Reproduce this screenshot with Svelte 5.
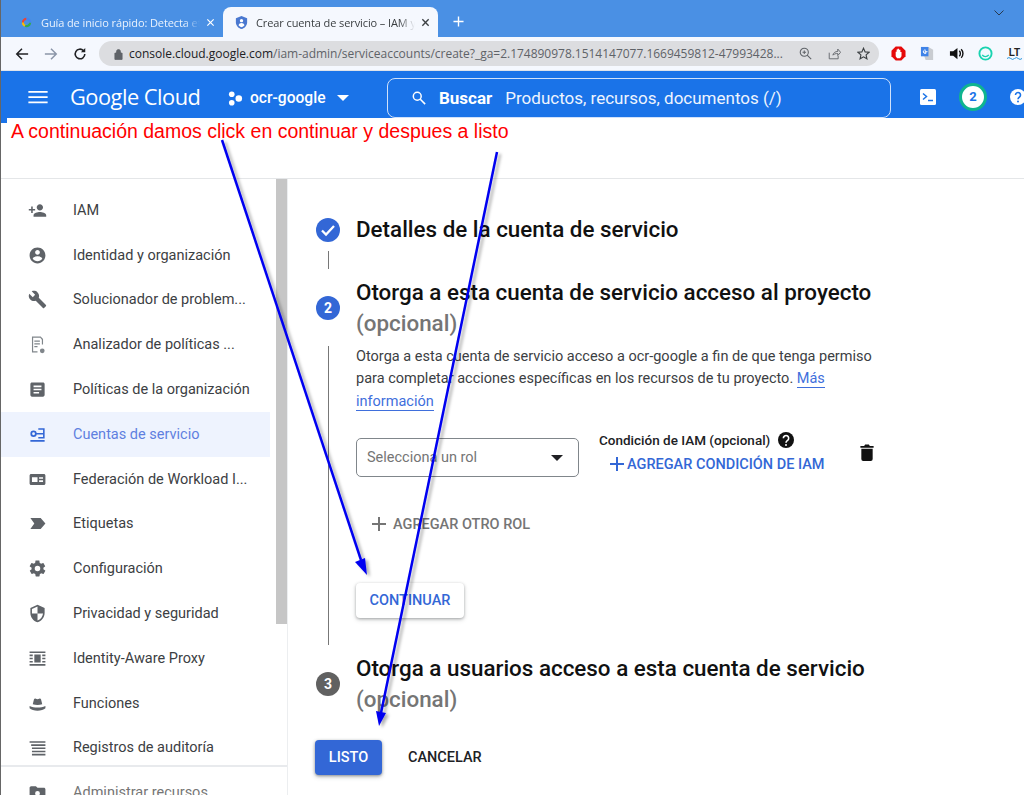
<script>
  const navItems = [
    { label: 'IAM', icon: 'M15 12c2.200 0 4-1.800 4-4s-1.800-4-4-4-4 1.800-4 4 1.800 4 4 4zm-9-2V7H4v3H1v2h3v3h2v-3h3v-2H6zm9 4c-2.700 0-8 1.300-8 4v2h16v-2c0-2.700-5.300-4-8-4z' },
    { label: 'Identidad y organización', icon: 'M12 2C6.500 2 2 6.500 2 12s4.500 10 10 10 10-4.500 10-10S17.500 2 12 2zm0 3c1.700 0 3 1.300 3 3s-1.300 3-3 3-3-1.300-3-3 1.300-3 3-3zm0 14.200c-2.500 0-4.700-1.300-6-3.200 0-2 4-3.100 6-3.100s6 1.100 6 3.100c-1.300 1.900-3.500 3.200-6 3.200z' },
    { label: 'Solucionador de problem...', icon: 'M22.700 19l-9.100-9.100c.9-2.300.4-5-1.500-6.900-2-2-5-2.400-7.400-1.300L9 6 6 9 1.600 4.700C.4 7.100.9 10.100 2.900 12.100c1.900 1.900 4.600 2.400 6.900 1.500l9.100 9.100c.4.400 1 .4 1.400 0l2.300-2.300c.5-.4.5-1.100.1-1.400z' },
    { label: 'Analizador de políticas ...', small: true, icon: 'M5 2h11l3 3v7h-1.500V6l-2-2.500H6.500v17H12V22H5V2zm3 5h7v1.500H8V7zm0 3.500h7V12H8v-1.500zM8 14h4v1.500H8V14zm10 3a3 3 0 1 1 0 6 3 3 0 0 1 0-6z' },
    { label: 'Políticas de la organización', icon: 'M19 3H5c-1.100 0-2 .9-2 2v14c0 1.100.9 2 2 2h14c1.100 0 2-.9 2-2V5c0-1.100-.9-2-2-2zm-5 14H7v-2h7v2zm3-4H7v-2h10v2zm0-4H7V7h10v2z' },
    { label: 'Cuentas de servicio', active: true, icon: 'M3 19h18v2H3v-2zM13 4h8v13h-8v-2h6v-3h-6v-2h6V6h-6V4zM7 7a4 4 0 1 1 0 8 4 4 0 0 1 0-8zm0 2.200a1.800 1.800 0 1 0 0 3.600 1.800 1.800 0 0 0 0-3.600zM10.500 10h3v2h-3z' },
    { label: 'Federación de Workload I...', icon: 'M20 5H4c-1.100 0-2 .9-2 2v10c0 1.100.9 2 2 2h16c1.100 0 2-.9 2-2V7c0-1.100-.9-2-2-2zM5 9h7v6H5V9zm9 0h5v2h-5V9zm0 4h5v2h-5v-2z' },
    { label: 'Etiquetas', icon: 'M3 5h13l6 7-6 7H3l5-7-5-7z' },
    { label: 'Configuración', icon: 'M19.400 13c0-.3.1-.6.1-1s0-.7-.1-1l2.100-1.600c.2-.2.2-.4.1-.6l-2-3.500c-.1-.2-.4-.3-.6-.2l-2.500 1c-.5-.4-1.100-.7-1.700-1l-.4-2.700c0-.2-.2-.4-.5-.4h-4c-.2 0-.4.2-.5.4l-.4 2.700c-.6.2-1.100.6-1.700 1l-2.500-1c-.2-.1-.5 0-.6.2l-2 3.500c-.1.2-.1.500.1.600L4.600 11c0 .3-.1.6-.1 1s0 .7.1 1l-2.100 1.600c-.2.2-.2.4-.1.6l2 3.500c.1.2.4.3.6.2l2.500-1c.5.4 1.100.7 1.700 1l.4 2.700c0 .2.2.4.5.4h4c.2 0 .4-.2.5-.4l.4-2.700c.6-.2 1.100-.6 1.700-1l2.500 1c.2.1.5 0 .6-.2l2-3.500c.1-.2.1-.5-.1-.6L19.400 13zM12 15.500a3.500 3.500 0 1 1 0-7 3.500 3.500 0 0 1 0 7z' },
    { label: 'Privacidad y seguridad', icon: 'M12 1L3 5v6c0 5.600 3.800 10.700 9 12 5.200-1.300 9-6.400 9-12V5l-9-4zm0 11h7c-.5 4.100-3.300 7.800-7 8.900V12H5V6.300l7-3.100V12z' },
    { label: 'Identity-Aware Proxy', icon: 'M2 3h20v2H2V3zm0 16h20v2H2v-2zM2 7h4v2H2V7zm0 4h4v2H2v-2zm0 4h4v2H2v-2zm16-8h4v2h-4V7zm0 4h4v2h-4v-2zm0 4h4v2h-4v-2zM8 7h8v10H8V7z' },
    { label: 'Funciones', icon: 'M2 15c3 1.500 6.500 2 10 2s7-.5 10-2v3c-2 2-6 3-10 3s-8-1-10-3v-3zM6 13l1.500-6c.3-1 1.300-1.500 2.300-1.100l2.200.7 2.200-.7c1-.4 2-.1 2.300 1.100L18 13c-3.800 1.200-8.200 1.200-12 0z' },
    { label: 'Registros de auditoría', icon: 'M2 4h20v2H2V4zm2 4h18v2H4V8zm1 4h17v2H5v-2zm0 4h17v2H5v-2zm0 4h17v2H5v-2z' }
  ];
</script>

<div class="page">
  <div class="tabstrip">
    <div class="tab off">
      <svg class="favicon" viewBox="0 0 16 16"><path d="M8 3a5 5 0 0 0-5 5l2.200.4A3 3 0 0 1 8 5.200z" fill="#ea4335"/><path d="M3 8a5 5 0 0 0 3 4.600l1-2A3 3 0 0 1 5.200 8z" fill="#fbbc04"/><path d="M6 12.600A5 5 0 0 0 13 8h-2.200A3 3 0 0 1 7 10.600z" fill="#34a853"/><path d="M8 3a5 5 0 0 1 5 5h-2.200A3 3 0 0 0 8 5.200z" fill="#4285f4"/></svg>
      <span class="tabtitle">Guía de inicio rápido: Detecta eti</span>
      <svg class="tabx" viewBox="0 0 10 10"><path d="M1.500 1.500l7 7m0-7l-7 7" stroke="#fff" stroke-width="1.300"/></svg>
    </div>
    <div class="tab on">
      <svg class="favicon" viewBox="0 0 16 16"><path d="M8 1l6 2.500v4.200c0 3.500-2.500 6.300-6 7.300-3.500-1-6-3.800-6-7.300V3.500z" fill="#4a78d0"/><circle cx="8" cy="6" r="1.800" fill="#fff"/><path d="M4.800 11c.5-1.700 1.800-2.400 3.200-2.400s2.700.7 3.200 2.400c-.8 1-2 1.700-3.200 2-1.200-.3-2.400-1-3.200-2z" fill="#fff"/></svg>
      <span class="tabtitle">Crear cuenta de servicio – IAM y a</span>
      <svg class="tabx" viewBox="0 0 10 10"><path d="M1.500 1.500l7 7m0-7l-7 7" stroke="#3c4043" stroke-width="1.500"/></svg>
    </div>
    <svg class="newtab" viewBox="0 0 12 12"><path d="M6 .5v11M.5 6h11" stroke="#fff" stroke-width="1.500"/></svg>
    <svg class="chev" viewBox="0 0 10 6"><path d="M.5.500L5 5 9.500.500" fill="none" stroke="#27394f" stroke-width="1"/></svg>
  </div>

  <div class="toolbar">
    <svg class="navbtn" viewBox="0 0 16 16"><path d="M15 8H2M8 2L2 8l6 6" fill="none" stroke="#202124" stroke-width="1.700"/></svg>
    <svg class="navbtn" viewBox="0 0 16 16"><path d="M1 8h13M8 2l6 6-6 6" fill="none" stroke="#8a95a8" stroke-width="1.700"/></svg>
    <svg class="navbtn" viewBox="0 0 16 16"><path d="M13.500 8a5.500 5.500 0 1 1-1.600-3.900" fill="none" stroke="#202124" stroke-width="1.800"/><path d="M14 1v5H9z" fill="#202124"/></svg>
    <div class="urlbar">
      <svg class="lock" viewBox="0 0 10 12"><path d="M1 5h8v7H1zM2.800 5V3.300a2.200 2.200 0 0 1 4.400 0V5" fill="#5f6368" stroke="#5f6368" stroke-width=".9"/></svg>
      <span class="url"><span class="host">console.cloud.google.com</span>/iam-admin/serviceaccounts/create?_ga=2.174890978.1514147077.1669459812-47993428...</span>
      <svg class="urlicon" viewBox="0 0 16 16"><circle cx="6.500" cy="6.500" r="5" fill="none" stroke="#5f6368" stroke-width="1.300"/><path d="M10 10l5 5M6.500 4.300v4.400M4.300 6.500h4.400" stroke="#5f6368" stroke-width="1.300"/></svg>
      <svg class="urlicon" viewBox="0 0 16 16"><path d="M1.500 7v7.500h11V11M6 10c.5-3 3-4.500 6-4.500V2.500l3.500 4-3.500 4V8c-2.500 0-4.500.5-6 2z" fill="none" stroke="#5f6368" stroke-width="1.100"/></svg>
      <svg class="urlicon" viewBox="0 0 16 16"><path d="M8 1.500l2 4.500 4.800.5-3.600 3.200 1 4.800L8 12.100l-4.200 2.400 1-4.800L1.200 6.500 6 6z" fill="none" stroke="#3c4043" stroke-width="1.400"/></svg>
    </div>
    <div class="extensions">
      <svg viewBox="0 0 16 16"><path d="M5 .5h6L15.500 5v6L11 15.500H5L.5 11V5z" fill="#e60a0a"/><path d="M5 11V6h1V3.800h1V3h1.500v1H10v2.500h1.200V11l-1.500 2H6.500z" fill="#fff"/></svg>
      <svg viewBox="0 0 16 16"><path d="M1 1h8l5 3v11H6z" fill="#c9ccd1"/><path d="M1 1h8v10H1z" fill="#3f83e8"/><path d="M8 6H5.300v1.300h1.400A1.800 1.800 0 1 1 6.300 4.600" fill="none" stroke="#fff" stroke-width="1"/></svg>
      <svg viewBox="0 0 16 16"><path d="M1 5.500h3.500L9 2v12L4.500 10.500H1z" fill="#111"/><path d="M11 5c1.500 1.500 1.500 4.500 0 6M13 3.500c2.500 2.500 2.500 6.500 0 9" fill="none" stroke="#111" stroke-width="1.500"/></svg>
      <svg viewBox="0 0 16 16"><circle cx="8" cy="8" r="6.500" fill="none" stroke="#19d3b0" stroke-width="2"/><path d="M4.500 9.500c1.500 2.500 5 2.500 7 0" fill="none" stroke="#19d3b0" stroke-width="1.500"/></svg>
      <span class="lt">LT<svg viewBox="0 0 16 3"><path d="M0 1.500q2-2 4 0t4 0 4 0 4 0" fill="none" stroke="#1c8fd9" stroke-width="1"/></svg></span>
    </div>
  </div>

  <header class="topbar">
    <svg class="menu" viewBox="0 0 22 16"><path d="M0 2h22M0 8h22M0 14h22" stroke="#fff" stroke-width="2"/></svg>
    <span class="brand">Google Cloud</span>
    <svg class="projdots" viewBox="0 0 16 16"><circle cx="4" cy="3.500" r="3" fill="#fff"/><circle cx="11.500" cy="8" r="3.500" fill="#fff"/><circle cx="4" cy="12.500" r="3" fill="#fff"/></svg>
    <span class="project">ocr-google</span>
    <svg class="caret" viewBox="0 0 12 6"><path d="M0 0h12L6 6z" fill="#fff"/></svg>
    <div class="search">
      <svg class="searchicon" viewBox="0 0 16 16"><circle cx="6" cy="6" r="4.500" fill="none" stroke="#fff" stroke-width="1.700"/><path d="M9.500 9.500l5.500 5.500" stroke="#fff" stroke-width="1.800"/></svg>
      <b>Buscar</b>
      <span>Productos, recursos, documentos (/)</span>
    </div>
    <svg class="terminal" viewBox="0 0 16 16"><rect width="16" height="16" rx="1.500" fill="#fff"/><path d="M3 4.500L6.500 7.500 3 10.500" fill="none" stroke="#1a73e8" stroke-width="1.500"/><path d="M8 11.500h5" stroke="#1a73e8" stroke-width="1.500"/></svg>
    <span class="notif">2</span>
    <svg class="help" viewBox="0 0 16 16"><circle cx="8" cy="8" r="8" fill="#fff"/><path d="M5.500 6a2.500 2.500 0 1 1 4 2c-1 .7-1.500 1.200-1.500 2.300" fill="none" stroke="#1a73e8" stroke-width="1.600"/><circle cx="8" cy="12.500" r="1" fill="#1a73e8"/></svg>
  </header>

  <div class="note">A continuación damos click en continuar y despues a listo</div>

  <div class="workspace">
    <aside class="sidebar">
      <nav class="navlist">
        {#each navItems as item}
          <div class="navitem" class:active={item.active} class:small={item.small}>
            <svg viewBox="0 0 24 24"><path d={item.icon}/></svg>
            <span>{item.label}</span>
          </div>
        {/each}
      </nav>
      <div class="navitem manage">
        <svg viewBox="0 0 24 24"><path d="M20 6h-8l-2-2H4c-1.100 0-2 .9-2 2v12c0 1.100.9 2 2 2h16c1.100 0 2-.9 2-2V8c0-1.100-.9-2-2-2zm-8 10a3 3 0 1 1 0-6 3 3 0 0 1 0 6z"/></svg>
        <span>Administrar recursos</span>
      </div>
      <div class="scrollthumb"></div>
    </aside>

    <main class="content">
      <div class="step first">
        <span class="bullet">
          <svg viewBox="0 0 24 24"><circle cx="12" cy="12" r="12" fill="#3367d6"/><path d="M6 12.500l4 4 8-8.500" fill="none" stroke="#fff" stroke-width="2.300"/></svg>
        </span>
        <h2>Detalles de la cuenta de servicio</h2>
      </div>
      <div class="rail short"></div>

      <div class="step">
        <span class="bullet num">2</span>
        <h2>Otorga a esta cuenta de servicio acceso al proyecto <em>(opcional)</em></h2>
      </div>
      <div class="stepbody">
        <p>Otorga a esta cuenta de servicio acceso a ocr-google a fin de que tenga permiso para completar acciones específicas en los recursos de tu proyecto. <a href="#top">Más información</a></p>
        <div class="rolerow">
          <div class="roleselect">
            <span>Selecciona un rol</span>
            <svg viewBox="0 0 12 6"><path d="M0 0h12L6 6z" fill="#202124"/></svg>
          </div>
          <div class="condition">
            <div class="condlabel">
              Condición de IAM (opcional)
              <svg viewBox="0 0 24 24"><circle cx="12" cy="12" r="12" fill="#111"/><path d="M8 9.500a4 4 0 1 1 6.500 3c-1.600 1.200-2.500 1.800-2.500 3.500" fill="none" stroke="#fff" stroke-width="2.400"/><circle cx="12" cy="19.500" r="1.500" fill="#fff"/></svg>
            </div>
            <div class="condadd">
              <svg viewBox="0 0 14 14"><path d="M7 0v14M0 7h14" stroke="#3367d6" stroke-width="2"/></svg>
              AGREGAR CONDICIÓN DE IAM
            </div>
          </div>
          <svg class="trash" viewBox="0 0 14 18"><path d="M1 5h12v11a2 2 0 0 1-2 2H3a2 2 0 0 1-2-2zM0 2h4l1-1.500h4L10 2h4v2H0z" fill="#111"/></svg>
        </div>
        <div class="addrole">
          <svg viewBox="0 0 14 14"><path d="M7 0v14M0 7h14" stroke="#757575" stroke-width="2"/></svg>
          AGREGAR OTRO ROL
        </div>
        <button class="continue">CONTINUAR</button>
      </div>

      <div class="step third">
        <span class="bullet num grey">3</span>
        <h2>Otorga a usuarios acceso a esta cuenta de servicio <em>(opcional)</em></h2>
      </div>

      <div class="actions">
        <button class="done">LISTO</button>
        <button class="cancel">CANCELAR</button>
      </div>
    </main>
  </div>

  <!-- the hand drawn annotation arrows lie over the whole page -->
  <svg class="arrows" viewBox="0 0 1024 795">
    <defs>
      <filter id="arrowshadow" x="-20%" y="-20%" width="140%" height="140%">
        <feDropShadow dx="3" dy="2" stdDeviation="1.500" flood-color="#000" flood-opacity=".3"/>
      </filter>
    </defs>
    <g filter="url(#arrowshadow)">
      <path d="M222 140L361 560" stroke="#0000f0" stroke-width="2.500"/>
      <path d="M367 575L355 562 365 558z" fill="#0000f0"/>
      <path d="M497 152L381 713" stroke="#0000f0" stroke-width="2.500"/>
      <path d="M379 726L376 711 386 713z" fill="#0000f0"/>
    </g>
  </svg>
</div>

<style>
  :global(body) {
    margin: 0;
    background: #fff;
  }

  .page {
    position: relative;
    width: 1024px;
    height: 795px;
    overflow: hidden;
    font-family: Roboto, "Liberation Sans", sans-serif;
    background: #fff;
    border-left: 1px solid #666;
    box-sizing: border-box;
  }

  /* browser chrome */
  .tabstrip {
    display: flex;
    align-items: flex-end;
    height: 37px;
    background: #4a90e4;
    padding-left: 7px;
    font-family: "Open Sans", "Liberation Sans", sans-serif;
    font-size: 11px;
  }

  .tab {
    display: flex;
    align-items: center;
    width: 215px;
    height: 30px;
    box-sizing: border-box;
    padding: 0 8px 0 11px;
  }

  .tab.off {
    color: #eaf2fd;
  }

  .tab.on {
    background: #f5f8fe;
    border-radius: 8px 8px 0 0;
    color: #3c4043;
  }

  .favicon {
    width: 15px;
    height: 15px;
    flex: none;
    margin-right: 7px;
  }

  .tabtitle {
    flex: 1;
    min-width: 0;
    white-space: nowrap;
    overflow: hidden;
    letter-spacing: -.1px;
    mask-image: linear-gradient(to right, #000 90%, transparent);
  }

  .tabx {
    width: 9px;
    height: 9px;
    flex: none;
    margin-left: 6px;
  }

  .newtab {
    width: 11px;
    height: 11px;
    margin: 0 0 10px 15px;
  }

  .chev {
    width: 10px;
    height: 6px;
    margin-left: auto;
    margin-right: 20px;
    align-self: flex-start;
    margin-top: 10px;
  }

  .toolbar {
    display: flex;
    align-items: center;
    height: 33px;
    background: #f5f8fe;
    padding-left: 14px;
    border-bottom: 1px solid #dfe3ea;
  }

  .navbtn {
    width: 14px;
    height: 14px;
    margin-right: 15px;
    flex: none;
  }

  .urlbar {
    display: flex;
    align-items: center;
    width: 780px;
    height: 25px;
    margin-left: -3px;
    border-radius: 13px;
    background: #dcdde0;
    padding: 0 9px 0 15px;
    box-sizing: border-box;
    flex: none;
  }

  .lock {
    width: 9px;
    height: 12px;
    flex: none;
    margin-right: 6px;
  }

  .url {
    flex: 1;
    min-width: 0;
    white-space: nowrap;
    overflow: hidden;
    color: #5f6368;
    font-family: "Open Sans", sans-serif;
    font-size: 12px;
    letter-spacing: -.02px;
  }

  .host {
    color: #202124;
  }

  .urlicon {
    width: 13px;
    height: 13px;
    margin-left: 16px;
    flex: none;
  }

  .extensions {
    display: flex;
    align-items: center;
    gap: 14px;
    margin-left: 12px;
  }

  .extensions > svg {
    width: 15px;
    height: 15px;
    flex: none;
  }

  .lt {
    display: block;
    font: bold 10px/9px "Liberation Sans", sans-serif;
    width: 15px;
    color: #222;
    text-align: center;
  }

  .lt svg {
    display: block;
    width: 15px;
    height: 3px;
  }

  /* console header */
  .topbar {
    display: flex;
    align-items: center;
    height: 47px;
    box-sizing: border-box;
    padding: 7px 0 0 27px;
    background: #1a73e8;
    color: #fff;
  }

  .menu {
    width: 20px;
    height: 14px;
    flex: none;
    margin-top: -3px;
  }

  .brand {
    margin: -3px 0 0 22px;
    font-family: "Open Sans", sans-serif;
    font-size: 21.800px;
    letter-spacing: -.5px;
    width: 158px;
    flex: none;
    white-space: nowrap;
  }

  .projdots {
    width: 15px;
    height: 15px;
    flex: none;
  }

  .project {
    margin-left: 7px;
    font-size: 15.600px;
    font-weight: 500;
    width: 82px;
    flex: none;
    white-space: nowrap;
  }

  .caret {
    width: 12px;
    height: 6px;
    flex: none;
    margin-left: 5px;
  }

  .search {
    display: flex;
    align-items: center;
    width: 504px;
    height: 40px;
    flex: none;
    margin-left: 38px;
    box-sizing: border-box;
    border: 1px solid #cfe1fb;
    border-radius: 8px;
    padding-left: 24px;
    font-size: 17px;
  }

  .searchicon {
    width: 14px;
    height: 14px;
    margin-right: 13px;
    flex: none;
  }

  .search b {
    font-weight: 700;
  }

  .search span {
    margin-left: 13px;
    white-space: nowrap;
    color: #eef4fe;
  }

  .terminal {
    width: 16px;
    height: 16px;
    margin: -3px 0 0 29px;
    flex: none;
  }

  .notif {
    width: 22px;
    height: 22px;
    margin: -3px 0 0 23px;
    flex: none;
    border: 3px solid #0fb48f;
    border-radius: 50%;
    background: #fff;
    color: #1a73e8;
    font-size: 13px;
    font-weight: 700;
    text-align: center;
    line-height: 22px;
  }

  .help {
    width: 16px;
    height: 16px;
    margin: -3px 0 0 23px;
    flex: none;
  }

  .note {
    position: relative;
    height: 61px;
    padding: 1px 0 0 10px;
    box-sizing: border-box;
    border-bottom: 1px solid #e4e6e8;
    color: #ff0000;
    font-family: "Liberation Sans", Arial, sans-serif;
    font-size: 19.500px;
    line-height: 24px;
    white-space: nowrap;
  }

  /* corner of the header that the pasted note does not cover */
  .note::before {
    content: "";
    position: absolute;
    left: 0;
    top: 0;
    width: 6px;
    height: 5px;
    background: #1a73e8;
  }

  .workspace {
    display: flex;
    height: 616px;
  }

  /* left navigation */
  .sidebar {
    position: relative;
    width: 287px;
    flex: none;
    box-sizing: border-box;
    border-right: 1px solid #eceef0;
    display: flex;
    flex-direction: column;
  }

  .navlist {
    padding: 9px 0 0 0;
    height: 588px;
    box-sizing: border-box;
    border-bottom: 2px solid #e8eaed;
    flex: none;
  }

  .navitem {
    display: flex;
    align-items: center;
    height: 44.800px;
    width: 269px;
    padding-left: 27px;
    box-sizing: border-box;
    font-size: 14.500px;
    color: #3c4043;
    white-space: nowrap;
  }

  .navitem svg {
    width: 19px;
    height: 19px;
    margin-right: 26px;
    flex: none;
    fill: #5f6368;
  }

  .navitem.small svg {
    fill: #80868b;
  }

  .navitem.active {
    background: #eef3fe;
    color: #5f7fe0;
  }

  .navitem.active svg {
    fill: #3367d6;
  }

  .manage {
    flex: none;
    color: #757575;
    margin-top: 3px;
  }

  .scrollthumb {
    position: absolute;
    top: 0;
    right: 0;
    width: 11px;
    height: 445px;
    background: #c6c6c6;
  }

  /* form */
  .content {
    flex: 1;
    min-width: 0;
    padding: 35px 0 0 28px;
    color: #202124;
  }

  .step {
    display: flex;
    align-items: center;
  }

  .step h2 {
    margin: 0;
    font-size: 22.400px;
    font-weight: 500;
    line-height: 31.500px;
    color: #111;
    white-space: nowrap;
  }

  .step em {
    display: block;
    font-style: normal;
    color: #757575;
  }

  .bullet {
    display: block;
    width: 24px;
    height: 24px;
    flex: none;
    margin-right: 16px;
  }

  .bullet svg {
    display: block;
    width: 24px;
    height: 24px;
  }

  .bullet.num {
    border-radius: 50%;
    background: #3367d6;
    color: #fff;
    font-size: 14px;
    font-weight: 700;
    line-height: 24px;
    text-align: center;
  }

  .bullet.grey {
    background: #616161;
  }

  .rail.short {
    width: 1px;
    height: 18px;
    margin: 5px 0 8px 12px;
    background: #777;
  }

  .stepbody {
    margin: 6px 0 0 12px;
    padding-left: 27px;
    border-left: 1px solid #777;
    height: 299px;
    box-sizing: border-box;
  }

  .stepbody p {
    margin: 0;
    width: 525px;
    font-size: 14.500px;
    line-height: 22.500px;
    color: #3c4043;
  }

  .stepbody a {
    color: #3f6fdc;
    text-decoration: none;
    border-bottom: 1px solid #3f6fdc;
  }

  .rolerow {
    display: flex;
    align-items: flex-start;
    margin-top: 25px;
  }

  .roleselect {
    display: flex;
    align-items: center;
    justify-content: space-between;
    width: 223px;
    height: 39px;
    box-sizing: border-box;
    border: 1px solid #80868b;
    border-radius: 5px;
    padding: 0 15px 0 10px;
    font-size: 14.500px;
    color: #757575;
  }

  .roleselect svg {
    width: 12px;
    height: 6px;
  }

  .condition {
    margin: -12px 0 0 20px;
    width: 261px;
  }

  .condlabel {
    display: flex;
    align-items: center;
    gap: 8px;
    height: 28px;
    font-size: 13.500px;
    font-weight: 500;
    color: #202124;
    white-space: nowrap;
  }

  .condlabel svg {
    width: 16px;
    height: 16px;
  }

  .condadd {
    display: flex;
    align-items: center;
    gap: 3px;
    margin-left: 11px;
    height: 20px;
    font-size: 14.500px;
    font-weight: 500;
    color: #3367d6;
    white-space: nowrap;
  }

  .condadd svg {
    width: 14px;
    height: 14px;
  }

  .trash {
    width: 14px;
    height: 17px;
    flex: none;
    margin-top: 6px;
  }

  .addrole {
    display: flex;
    align-items: center;
    gap: 7px;
    margin: 37px 0 0 16px;
    height: 20px;
    font-size: 14.500px;
    font-weight: 500;
    color: #757575;
  }

  .addrole svg {
    width: 14px;
    height: 14px;
  }

  button {
    font-family: inherit;
    font-size: 14.500px;
    font-weight: 500;
    border: 0;
    cursor: pointer;
  }

  .continue {
    display: block;
    margin-top: 49px;
    width: 108px;
    height: 35px;
    padding: 0;
    border-radius: 4px;
    background: #fff;
    color: #3367d6;
    box-shadow: 0 1px 3px rgba(60, 64, 67, .4), 0 2px 5px rgba(60, 64, 67, .15);
  }

  .step.third {
    margin-top: 8px;
  }

  .actions {
    display: flex;
    align-items: center;
    margin: 24px 0 0 -1px;
  }

  .done {
    width: 67px;
    height: 35px;
    padding: 0;
    border-radius: 4px;
    background: #3367d6;
    color: #fff;
    box-shadow: 0 1px 3px rgba(60, 64, 67, .5), 0 2px 5px rgba(60, 64, 67, .2);
  }

  .cancel {
    margin-left: 10px;
    padding: 0 16px;
    height: 35px;
    background: none;
    color: #202124;
  }

  .arrows {
    position: absolute;
    left: -1px;
    top: 0;
    width: 1024px;
    height: 795px;
    pointer-events: none;
  }
</style>
